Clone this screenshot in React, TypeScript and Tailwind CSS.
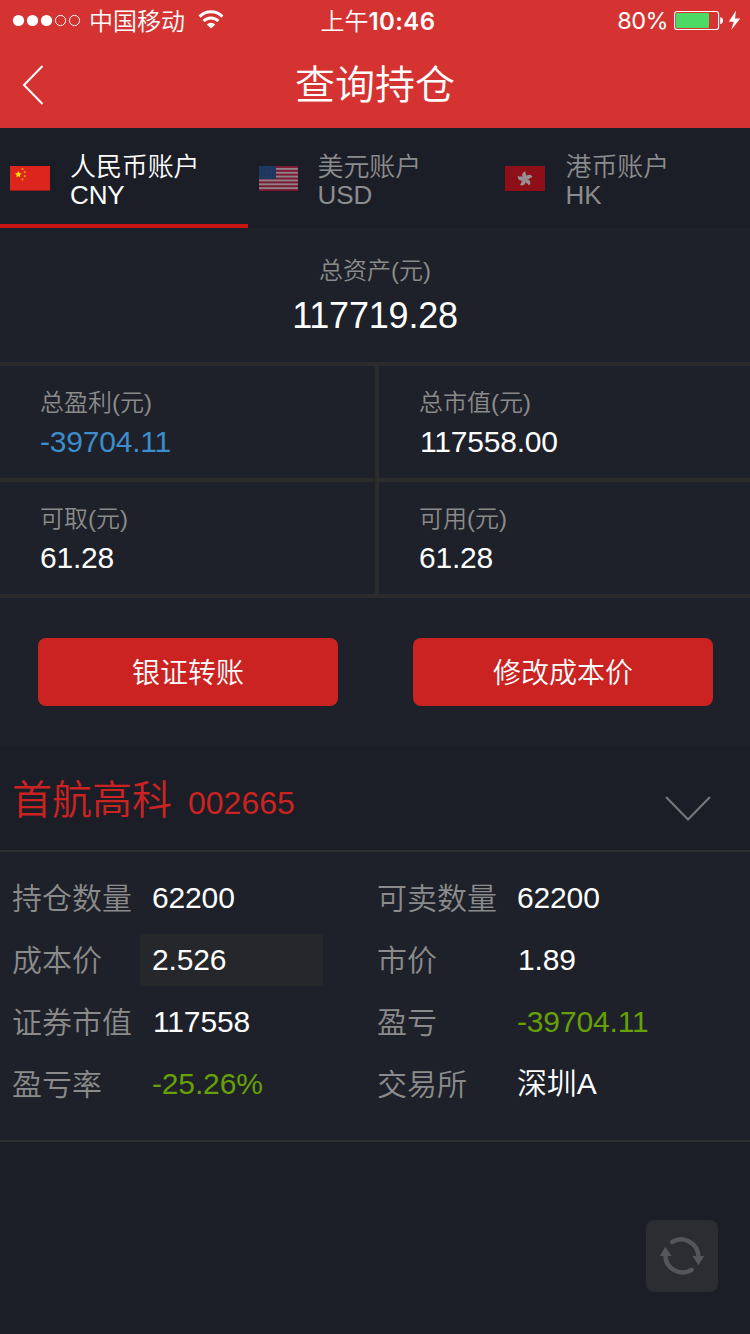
import React from "react";

const Wifi = () => (
  <svg className="mt-2.5 ml-[13px] block h-[19px] w-[26px]" viewBox="0 0 26 19" fill="none" stroke="#fff" strokeWidth="3">
    <path d="M1.6 6.6 A16 16 0 0 1 24.4 6.6" />
    <path d="M5.6 11 A10.4 10.4 0 0 1 20.4 11" />
    <path d="M13 18.6 L8.8 14.6 A5.8 5.8 0 0 1 17.2 14.6 Z" fill="#fff" stroke="none" />
  </svg>
);

const Signal = () => (
  <svg className="mt-3.5 block h-[13px] w-[69px]" viewBox="0 0 69 13" fill="#fff">
    <circle cx="6.5" cy="6.5" r="5.6" />
    <circle cx="20.5" cy="6.5" r="5.6" />
    <circle cx="34.5" cy="6.5" r="5.6" />
    <circle cx="48.5" cy="6.5" r="5.1" fill="none" stroke="#fff" />
    <circle cx="62.5" cy="6.5" r="5.1" fill="none" stroke="#fff" />
  </svg>
);

const Battery = () => (
  <svg className="mt-[9px] block h-6 w-[68px]" viewBox="0 0 68 24">
    <rect x="0.6" y="2.5" width="44" height="18" rx="2.6" fill="none" stroke="#fff" strokeWidth="1.1" />
    <rect x="2" y="4" width="33" height="15" rx="1.2" fill="#4cd964" />
    <path d="M46.2 8.2 C48.2 8.4 49 9.6 49 11.6 C49 13.6 48.2 14.9 46.2 15.1 Z" fill="#fff" />
    <path d="M62 1.4 L54.8 12.8 L59.8 12.8 L57.2 21 L66.2 9.4 L61 9.4 Z" fill="#fff" />
  </svg>
);

const star = (cx: number, cy: number, r: number) =>
  Array.from({ length: 10 }, (_, i) => {
    const a = (Math.PI / 5) * i - Math.PI / 2;
    const q = i % 2 ? r * 0.5 : r;
    return `${cx + q * Math.cos(a)},${cy + q * Math.sin(a)}`;
  }).join(" ");

const FlagCN = () => (
  <svg className="block h-[25px] w-10" viewBox="0 0 40 25">
    <rect width="40" height="25" fill="#dc261d" />
    <rect y="24" width="40" height="1" fill="#8f1d1c" />
    <polygon points={star(8.3, 8.5, 3.4)} fill="#ffdf00" />
    <circle cx="12.5" cy="3" r="1.1" fill="#e9900f" />
    <circle cx="14.8" cy="6.2" r="1.1" fill="#e9900f" />
    <circle cx="14.8" cy="10.2" r="1.1" fill="#e9900f" />
    <circle cx="12.5" cy="13.4" r="1.1" fill="#e9900f" />
  </svg>
);

const FlagUS = () => (
  <svg className="block h-[25px] w-[39px]" viewBox="0 0 39 25">
    <rect width="39" height="25" fill="#8d8187" />
    {[0, 1, 2, 3, 4, 5, 6].map((i) => (
      <rect key={i} y={i * 3.85} width="39" height="1.93" fill="#7d1831" />
    ))}
    <rect width="17" height="13" fill="#1d3760" />
    {[0, 1, 2, 3, 4].map((r) =>
      [0, 1, 2, 3, 4, 5].map((c) => (
        <circle key={`${r}-${c}`} cx={1.7 + c * 2.7} cy={1.6 + r * 2.4} r="0.4" fill="#3d5273" />
      ))
    )}
  </svg>
);

const FlagHK = () => (
  <svg className="block h-[25px] w-10" viewBox="0 0 40 25">
    <rect width="40" height="25" fill="#8e0f18" />
    {[0, 72, 144, 216, 288].map((a) => (
      <path key={a} transform={`rotate(${a} 20 13)`} d="M20 13 C15.6 10.8 16.6 5.8 20.8 5.2 C19.4 7.4 23.2 9 20 13 Z" fill="#999093" />
    ))}
  </svg>
);

const Tab = ({ flag, name, code, active }: { flag: React.ReactNode; name: string; code: string; active?: boolean }) => (
  <div className={active ? "flex h-full w-[248px] border-b-4 border-[#c91414] pl-2.5 text-white" : "flex h-full w-[248px] border-b-4 border-transparent pl-2.5 text-[#8b8c8f]"}>
    <div className={active ? "mt-[38px] w-[60px]" : "mt-[38px] w-[59.5px]"}>{flag}</div>
    <div className="mt-[25px] text-[26px] leading-7 tracking-[-0.1px]">
      <div>{name}</div>
      <div>{code}</div>
    </div>
  </div>
);

const nudge = (value: string) => (value.startsWith("1") ? "ml-px" : "");

const Cell = ({ label, value, color = "text-white" }: { label: string; value: string; color?: string }) => (
  <div className="h-28 bg-[#1e2129] pt-[22px] pl-10">
    <div className="text-2xl leading-[30px] text-[#8b8b8b]">{label}</div>
    <div className={`mt-[5px] text-[30px] leading-[38px] tracking-[-0.2px] ${color} ${nudge(value)}`}>{value}</div>
  </div>
);

const Field = ({ label, value, color = "text-white", input }: { label: string; value: string; color?: string; input?: boolean }) => (
  <div className="flex h-[62px] items-center text-[30px] leading-[52px]">
    <div className="w-32 pt-0.5 whitespace-nowrap text-[#8b8b8b]">{label}</div>
    <div className={`h-[52px] w-[183px] pl-3 tracking-[-0.15px] ${color} ${input ? "bg-[#26272b]" : ""} ${nudge(value)}`}>{value}</div>
  </div>
);

export default function App() {
  return (
    <div className="flex h-[1334px] w-[750px] flex-col overflow-hidden bg-[#1b1e26] font-['Liberation_Sans','Noto_Sans_CJK_SC',sans-serif] font-[350] text-white">
      <header className="h-32 bg-[#d53331]">
        <div className="grid h-10 grid-cols-3 items-start text-2xl leading-10">
          <div className="flex items-start pl-3">
            <Signal />
            <span className="ml-2 pt-0.5">中国移动</span>
            <Wifi />
          </div>
          <div className="pt-0.5 pl-1.5 text-center font-['Inter','Noto_Sans_CJK_SC',sans-serif]">
            <span>上午</span><span className="font-semibold tracking-[0.4px]">10:46</span>
          </div>
          <div className="flex items-start justify-end pr-2 font-['Inter',sans-serif]">
            <span className="mr-1.5 pt-px text-[23.5px] font-normal tracking-[-0.6px]">80%</span>
            <Battery />
          </div>
        </div>
        <div className="grid h-[88px] grid-cols-[100px_1fr_100px] items-center">
          <svg className="ml-[22px] block h-10 w-[22px]" viewBox="0 0 22 40" fill="none" stroke="#fff" strokeWidth="2">
            <path d="M20.5 1 L2 20 L20.5 39" />
          </svg>
          <h1 className="text-center text-[40px] leading-[90px] font-[350]">查询持仓</h1>
        </div>
      </header>

      <nav className="flex h-[100px]">
        <Tab flag={<FlagCN />} name="人民币账户" code="CNY" active />
        <Tab flag={<div className="pl-px"><FlagUS /></div>} name="美元账户" code="USD" />
        <Tab flag={<div className="-ml-px"><FlagHK /></div>} name="港币账户" code="HK" />
      </nav>

      <section className="h-[134px] bg-[#1e2129] pt-7 text-center">
        <div className="text-2xl leading-[30px] text-[#8b8b8b]">总资产(元)</div>
        <div className="mt-2 text-4xl leading-[44px] tracking-[-0.2px]">117719.28</div>
      </section>

      <section className="grid grid-cols-[375px_371px] gap-1 bg-[#2c2b2c] py-1">
        <Cell label="总盈利(元)" value="-39704.11" color="text-[#3d8ccc]" />
        <Cell label="总市值(元)" value="117558.00" />
        <Cell label="可取(元)" value="61.28" />
        <Cell label="可用(元)" value="61.28" />
      </section>

      <section className="flex h-[148px] gap-[75px] bg-[#1e2129] pt-10 pl-[38px] text-[28px] leading-[68px]">
        <button className="h-[68px] w-[300px] rounded-lg bg-[#cb2322] pt-0.5">银证转账</button>
        <button className="h-[68px] w-[300px] rounded-lg bg-[#cb2322] pt-0.5">修改成本价</button>
      </section>

      <section>
        <div className="flex h-[106px] justify-between border-b-2 border-[#2d2d2f] pr-[38px] pl-3 text-[#cb2322]">
          <div className="flex items-baseline leading-[108px]">
            <span className="text-[40px]">首航高科</span>
            <span className="ml-4 text-[32px]">002665</span>
          </div>
          <svg className="mt-[49px] block h-7 w-12" viewBox="0 0 48 28" fill="none" stroke="#78787b" strokeWidth="2">
            <path d="M2 2 L24 24.5 L46 2" />
          </svg>
        </div>
        <div className="grid h-[290px] grid-cols-[365px_1fr] content-start border-b-2 border-[#2d2d2f] bg-[#1e2129] pt-[15px] pl-3">
          <Field label="持仓数量" value="62200" />
          <Field label="可卖数量" value="62200" />
          <Field label="成本价" value="2.526" input />
          <Field label="市价" value="1.89" />
          <Field label="证券市值" value="117558" />
          <Field label="盈亏" value="-39704.11" color="text-[#66a005]" />
          <Field label="盈亏率" value="-25.26%" color="text-[#66a005]" />
          <Field label="交易所" value="深圳A" />
        </div>
      </section>

      <div className="flex justify-end pt-[78px] pr-8">
        <button className="h-[72px] w-[72px] rounded-lg bg-[#2c2d32]">
          <svg className="block h-[72px] w-[72px]" viewBox="0 0 72 72" fill="none" stroke="#55565b" strokeWidth="4.4" strokeLinecap="round">
            <path d="M26.3 22 A17.2 17.2 0 0 1 52.4 37" />
            <path d="M45.6 49.8 A17.2 17.2 0 0 1 19.4 35" />
            <path d="M46.4 36 L58.2 36 L52.4 45.2 Z" fill="#55565b" stroke="none" />
            <path d="M13.8 36 L25.6 36 L19.4 26.8 Z" fill="#55565b" stroke="none" />
          </svg>
        </button>
      </div>
    </div>
  );
}
